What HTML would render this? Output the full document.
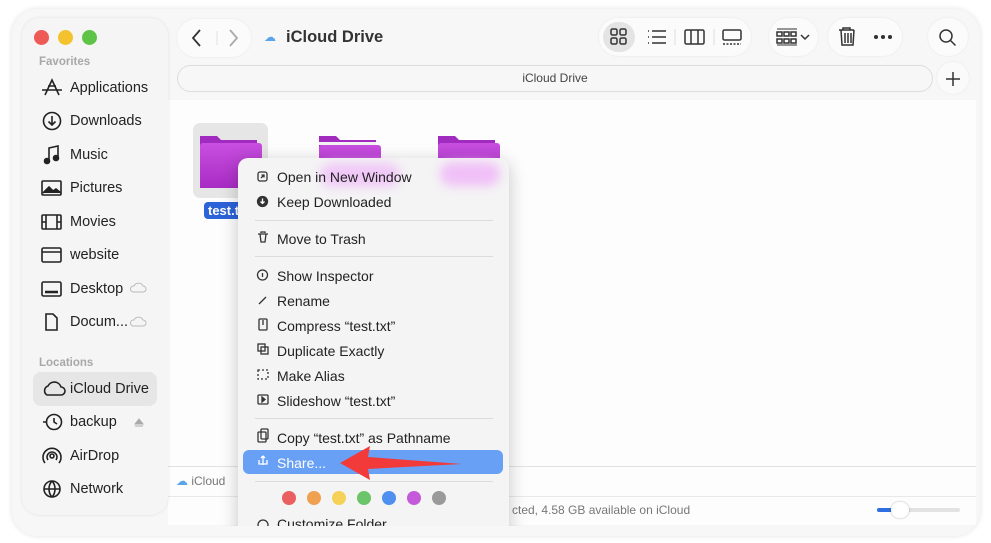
<!DOCTYPE html>
<html><head><meta charset="utf-8"><style>
*{margin:0;padding:0;box-sizing:border-box}
html,body{width:991px;height:543px;overflow:hidden}
body{background:#fff;font-family:"Liberation Sans",sans-serif;position:relative;color:#262626}
.win{position:absolute;left:12px;top:9px;width:968px;height:527px;border-radius:26px;background:#f7f7f7;box-shadow:0 0 6px rgba(0,0,0,.12)}
.main{position:absolute;left:168px;top:100px;width:808px;height:425px;background:#fdfdfd}
.side{position:absolute;left:22px;top:18px;width:146px;height:497px;border-radius:18px;background:#f5f5f5;box-shadow:0 0 3px rgba(0,0,0,.1)}
.dot{position:absolute;top:30px;width:15px;height:15px;border-radius:50%}
.sh{position:absolute;left:39px;font-size:11.5px;color:#a8a8a8;font-weight:bold}
.si{position:absolute;left:70px;font-size:14.5px;color:#222}
.pill{position:absolute;background:#fbfbfb;border-radius:20px;box-shadow:0 0 2px rgba(0,0,0,.08)}
.clip{position:absolute;left:0;top:0;width:991px;height:526px;overflow:hidden}
.menu{position:absolute;left:238px;top:158px;width:271px;height:400px;background:#f4f4f4;border-radius:10px;box-shadow:0 4px 18px rgba(0,0,0,.22)}
.mi{position:absolute;left:277px;font-size:14px;color:#222}
.sep{position:absolute;left:255px;width:238px;height:1px;background:#dcdcdc}
.cd{position:absolute;top:491px;width:14px;height:14px;border-radius:50%}
</style></head><body>
<div class="win"></div>
<div class="main"></div>
<div style="position:absolute;left:168px;top:466px;width:808px;height:1px;background:#e2e2e2"></div>
<div style="position:absolute;left:168px;top:496px;width:808px;height:1px;background:#e8e8e8"></div>
<div style="position:absolute;left:176px;top:474px;font-size:12px;color:#777"><span style="color:#5aa4ea">☁</span> iCloud</div>
<div style="position:absolute;left:512px;top:503px;font-size:12px;color:#777">cted, 4.58 GB available on iCloud</div>
<div style="position:absolute;left:877px;top:508px;width:83px;height:4px;border-radius:2px;background:#e2e2e2"></div>
<div style="position:absolute;left:877px;top:508px;width:16px;height:4px;border-radius:2px;background:#2f6fe0"></div>
<div style="position:absolute;left:891px;top:502px;width:18px;height:16px;border-radius:8px;background:#fff;box-shadow:0 0 2px rgba(0,0,0,.3)"></div>

<div class="side"></div>
<div class="dot" style="left:34px;background:#ee5a56"></div>
<div class="dot" style="left:58px;background:#f5c22f"></div>
<div class="dot" style="left:82px;background:#5ec447"></div>
<div class="sh" style="top:56px">Favorites</div>
<div class="si" style="top:80px">Applications</div>
<div class="si" style="top:113px">Downloads</div>
<div class="si" style="top:147px">Music</div>
<div class="si" style="top:180px">Pictures</div>
<div class="si" style="top:214px">Movies</div>
<div class="si" style="top:247px">website</div>
<div class="si" style="top:281px">Desktop</div>
<div class="si" style="top:314px">Docum...</div>
<div class="sh" style="top:357px">Locations</div>
<div style="position:absolute;left:33px;top:372px;width:124px;height:34px;border-radius:8px;background:#e6e6e6"></div>
<div class="si" style="top:381px">iCloud Drive</div>
<div class="si" style="top:414px">backup</div>
<div class="si" style="top:448px">AirDrop</div>
<div class="si" style="top:481px">Network</div>
<svg style="position:absolute;left:0;top:0" width="170" height="543" fill="none" stroke="#222" stroke-width="1.6">
<path d="M45 95 L52 80 L59 95 M42 90 H62 M48 86 L56 86"/>
<circle cx="52" cy="121" r="8.5"/><path d="M52 116v9M48.5 121.5 52 125l3.5-3.5"/>
<path d="M49 161V148l9-2v12" /><circle cx="47" cy="161" r="2.5" fill="#222"/><circle cx="56" cy="158" r="2.5" fill="#222"/>
<rect x="42" y="181" width="19" height="14" rx="1"/><path d="M43 193l6-6 4 4 3-2 5 4" fill="#222"/>
<rect x="42" y="215" width="19" height="14" rx="1"/><path d="M46 215v14M57 215v14M42 222h4M57 222h4"/>
<rect x="42" y="248" width="19" height="14" rx="1.5"/><path d="M42 252h19"/>
<rect x="42" y="282" width="19" height="14" rx="1.5"/><path d="M45 292h13" stroke-width="2.5"/>
<path d="M46 314h7l4 4v12h-11z"/>
<path d="M47 395a5 5 0 0 1 1-9 7 7 0 0 1 13 1 4 4 0 0 1 0 8z"/>
<circle cx="54" cy="422" r="7.5"/><path d="M54 418v4l3 2M43 422h4"/>
<circle cx="52" cy="456" r="2"/><path d="M48 460a5 5 0 1 1 8 0M45 463a9 9 0 1 1 14 0"/>
<circle cx="52" cy="489" r="8"/><path d="M44 489h16M52 481c-4 4-4 12 0 16M52 481c4 4 4 12 0 16"/>
<path d="M133 292a3 3 0 0 1 1-6 5 5 0 0 1 9 0 3 3 0 0 1 0 6z" stroke="#bbb" stroke-width="1"/>
<path d="M133 326a3 3 0 0 1 1-6 5 5 0 0 1 9 0 3 3 0 0 1 0 6z" stroke="#bbb" stroke-width="1"/>
<path d="M135 424l4-5 4 5z M135 426h8" stroke="#aaa" fill="#aaa" stroke-width="1"/>
</svg>

<!-- toolbar -->
<div class="pill" style="left:177px;top:19px;width:74px;height:38px"></div>
<svg style="position:absolute;left:186px;top:26px" width="60" height="24" fill="none" stroke-width="1.8"><path d="M14 4l-7 8 7 8" stroke="#333"/><path d="M44 4l7 8-7 8" stroke="#aaa"/><path d="M31 5v14" stroke="#e2e2e2" stroke-width="1"/></svg>
<div style="position:absolute;left:264px;top:30px;font-size:12px;color:#5aa4ea">☁</div>
<div style="position:absolute;left:286px;top:28px;font-size:16.5px;font-weight:bold;color:#333">iCloud Drive</div>
<div class="pill" style="left:599px;top:18px;width:152px;height:38px"></div>
<div style="position:absolute;left:603px;top:22px;width:32px;height:30px;border-radius:15px;background:#e4e4e4"></div>
<div class="pill" style="left:769px;top:18px;width:49px;height:38px"></div>
<div class="pill" style="left:828px;top:18px;width:74px;height:38px"></div>
<div class="pill" style="left:928px;top:18px;width:40px;height:38px"></div>
<div style="position:absolute;left:177px;top:65px;width:756px;height:27px;border-radius:14px;border:1.5px solid #ddd;background:#f7f7f7;font-size:12px;color:#444;text-align:center;line-height:24px">iCloud Drive</div>
<div style="position:absolute;left:937px;top:62px;width:32px;height:32px;border-radius:16px;background:#fafafa;box-shadow:0 0 2px rgba(0,0,0,.08)"></div>
<svg style="position:absolute;left:600px;top:18px" width="380" height="80" fill="none" stroke="#333" stroke-width="1.5">
<rect x="11" y="11" width="6" height="6" rx="1.5"/><rect x="20" y="11" width="6" height="6" rx="1.5"/><rect x="11" y="20" width="6" height="6" rx="1.5"/><rect x="20" y="20" width="6" height="6" rx="1.5"/>
<path d="M52 13h14M52 19h14M52 25h14M48 13h1M48 19h1M48 25h1"/>
<path d="M75 11v16" stroke="#ddd" stroke-width="1"/>
<rect x="85" y="12" width="19" height="14" rx="1.5"/><path d="M91 12v14M98 12v14"/>
<path d="M114 11v16" stroke="#ddd" stroke-width="1"/>
<rect x="123" y="12" width="18" height="10" rx="1.5"/><path d="M123 26h18" stroke-dasharray="2 1.5"/>
<path d="M177 11h20M177 27h20" stroke-width="1"/><rect x="177" y="14" width="5" height="4"/><rect x="184" y="14" width="5" height="4"/><rect x="191" y="14" width="5" height="4"/><rect x="177" y="21" width="5" height="4"/><rect x="184" y="21" width="5" height="4"/><rect x="191" y="21" width="5" height="4"/>
<path d="M201 17l4 4 4-4"/>
<path d="M239 12h15M243 12v-2h7v2M241 12l1 15h11l1-15M245 15v10M248 15v10M251 15v10"/>
<circle cx="276" cy="19" r="1.3" fill="#333"/><circle cx="283" cy="19" r="1.3" fill="#333"/><circle cx="290" cy="19" r="1.3" fill="#333"/>
<circle cx="346" cy="18" r="6"/><path d="M350.5 22.5l5 5"/>
<path d="M353 54v14M346 61h14"/>
</svg>

<!-- folders -->
<div style="position:absolute;left:193px;top:123px;width:75px;height:75px;border-radius:7px;background:#e6e6e6"></div>
<svg style="position:absolute;left:195px;top:130px" width="320" height="60">
<defs><linearGradient id="g" x1="0" y1="0" x2="0" y2="1"><stop offset="0" stop-color="#c84fe0"/><stop offset="1" stop-color="#a82cc4"/></linearGradient></defs>
<path d="M5 6h17l4 4h36v48H5z" fill="#a12bbf"/><rect x="5" y="13" width="62" height="45" rx="3" fill="url(#g)"/>
<path d="M124 6h17l4 4h36v30h-57z" fill="#a12bbf"/><rect x="124" y="12" width="57" height="3" fill="#f3f3f3"/><rect x="124" y="15" width="62" height="40" rx="3" fill="url(#g)"/>
<path d="M243 6h17l4 4h36v30h-57z" fill="#a12bbf"/><rect x="243" y="13" width="62" height="40" rx="3" fill="url(#g)"/>
</svg>
<div style="position:absolute;left:204px;top:202px;width:40px;height:17px;border-radius:4px;background:#2c63d8;color:#fff;font-size:13px;font-weight:bold;padding-left:4px;line-height:17px">test.t</div>

<!-- menu -->
<div class="clip">
<div class="menu"></div>
<div style="position:absolute;left:320px;top:163px;width:80px;height:24px;border-radius:12px;background:#f0c8f7;filter:blur(5px)"></div>
<div style="position:absolute;left:440px;top:162px;width:60px;height:24px;border-radius:12px;background:#f0c0f7;filter:blur(5px)"></div>
<div style="position:absolute;left:243px;top:450px;width:260px;height:24px;border-radius:6px;background:#68a0f5"></div>
<div class="mi" style="top:169px">Open in New Window</div>
<div class="mi" style="top:194px">Keep Downloaded</div>
<div class="sep" style="top:220px"></div>
<div class="mi" style="top:231px">Move to Trash</div>
<div class="sep" style="top:256px"></div>
<div class="mi" style="top:268px">Show Inspector</div>
<div class="mi" style="top:293px">Rename</div>
<div class="mi" style="top:318px">Compress “test.txt”</div>
<div class="mi" style="top:343px">Duplicate Exactly</div>
<div class="mi" style="top:368px">Make Alias</div>
<div class="mi" style="top:393px">Slideshow “test.txt”</div>
<div class="sep" style="top:418px"></div>
<div class="mi" style="top:430px">Copy “test.txt” as Pathname</div>
<div class="mi" style="top:455px;color:#fff">Share...</div>
<div class="sep" style="top:481px"></div>
<div class="cd" style="left:282px;background:#ea5f5f"></div>
<div class="cd" style="left:307px;background:#f0a051"></div>
<div class="cd" style="left:332px;background:#f5d257"></div>
<div class="cd" style="left:357px;background:#6cc46a"></div>
<div class="cd" style="left:382px;background:#4f8ff0"></div>
<div class="cd" style="left:407px;background:#c45ad9"></div>
<div class="cd" style="left:432px;background:#9a9a9a"></div>
<div class="mi" style="top:516px">Customize Folder</div>
<svg style="position:absolute;left:250px;top:165px" width="30" height="370" fill="none" stroke="#333" stroke-width="1.3">
<rect x="8" y="7" width="9" height="9" rx="2"/><path d="M11 13l3-3M11.5 10h2.5v2.5"/>
<circle cx="12.5" cy="36.5" r="5" fill="#333"/><path d="M12.5 33.5v5M10.5 36.5l2 2 2-2" stroke="#fff"/>
<path d="M8 69h10M10 69l1 8h4l1-8M11 68v-1h4v1"/>
<circle cx="12.5" cy="110" r="5"/><path d="M12.5 108v4"/>
<path d="M9 139l7-7"/>
<rect x="9" y="154" width="8" height="11" rx="1"/><path d="M13 155v5"/>
<rect x="8" y="179" width="7" height="7"/><rect x="11" y="182" width="7" height="7"/>
<rect x="8" y="205" width="10" height="9" stroke-dasharray="2 2"/>
<rect x="8" y="230" width="10" height="9" rx="1"/><path d="M12 232l3 2.5-3 2.5z" fill="#333"/>
<rect x="8" y="267" width="8" height="10" rx="1"/><rect x="11" y="264" width="7" height="10" rx="1"/>
<path d="M9 295v4h8v-4M13 300v-9M11 293l2-2 2 2" stroke="#fff"/>
<circle cx="13" cy="360" r="5"/>
</svg>
</div>
<!-- arrow -->
<svg style="position:absolute;left:330px;top:440px" width="140" height="50"><path d="M10 23 L40 6 L38 17 L132 24 L38 29 L40 40 Z" fill="#f23a3a"/></svg>
</body></html>
